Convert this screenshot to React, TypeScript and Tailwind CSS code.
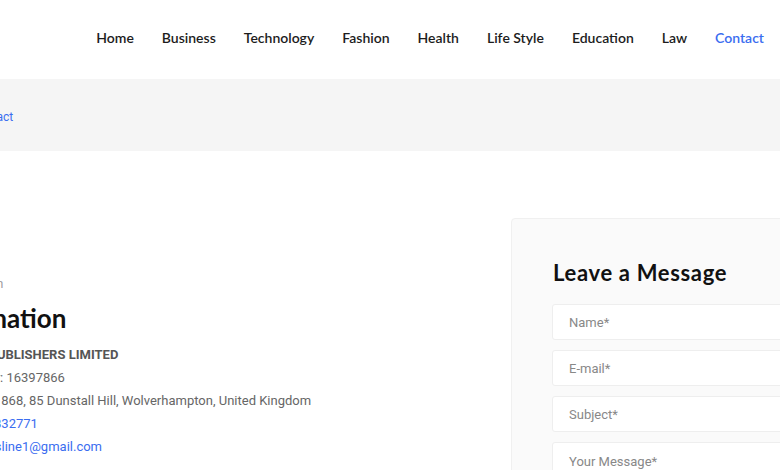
import React from 'react';

const navItems = ['Home', 'Business', 'Technology', 'Fashion', 'Health', 'Life Style', 'Education', 'Law', 'Contact'];

const heading = { fontFamily: 'Lato, "Noto Sans", sans-serif' };
const body = { fontFamily: 'Roboto, "Liberation Sans", sans-serif' };

export default function App() {
  return (
    <div className="w-[780px] h-[470px] overflow-hidden bg-white">
      {/* Header */}
      <header className="h-[79px] flex items-center justify-end pr-[16px] pb-[4px]" style={heading}>
        <nav className="flex items-center gap-[28px] text-[14px] font-semibold text-[#1c1c1c]">
          {navItems.map((item) => (
            <a key={item} href="#" className={item === 'Contact' ? 'text-[#3a6df0]' : ''}>
              {item}
            </a>
          ))}
        </nav>
      </header>

      {/* Breadcrumb */}
      <div className="h-[72px] bg-[#f5f5f5] flex items-center pt-[3px]" style={body}>
        <div className="-ml-[80px] text-[12px] text-[#555]">
          Home <span className="mx-1">/</span> <span className="text-[#3a6df0]">Contact</span>
        </div>
      </div>

      {/* Content */}
      <div className="flex pt-[67px]">
        <div className="w-[651px] shrink-0 -ml-[140px] pt-[58px]">
          <p className="ml-[3px] text-[12px] text-[#999] leading-[16px] mb-[11px]" style={body}>Get in touch with our team</p>
          <h2 className="-ml-[28px] text-[26px] font-bold text-[#111] leading-[30px] mb-[10px]" style={heading}>
            Contact Information
          </h2>
          <div className="ml-[10px] text-[13px] leading-[23px] text-[#666] whitespace-nowrap" style={body}>
            <p className="font-bold text-[#555]">THE NEWS PORTAL PUBLISHERS LIMITED</p>
            <p>Company Reg Number: 16397866</p>
            <p>Registered Office: Unit 868, 85 Dunstall Hill, Wolverhampton, United Kingdom</p>
            <p>
              Telephone: <a href="#" className="text-[#3a6df0]">+44 7457 832771</a>
            </p>
            <p>
              Email Us: <a href="#" className="text-[#3a6df0]">info.thenewsline1@gmail.com</a>
            </p>
          </div>
        </div>

        <div className="w-[420px] shrink-0 bg-[#fafafa] border border-[#f0f0f0] rounded-[4px] pl-[40px] pt-[40px] pb-[40px]">
          <h3 className="text-[22px] tracking-[0.03em] font-bold text-[#111] leading-[28px] mb-[17px] ml-[1px]" style={heading}>
            Leave a Message
          </h3>
          <form className="flex flex-col gap-[10px]" style={body}>
            {['Name*', 'E-mail*', 'Subject*'].map((p) => (
              <input
                key={p}
                placeholder={p}
                className="h-[36px] w-full bg-white border border-[#eeeeee] rounded-[3px] px-[16px] text-[13px] placeholder:text-[#888] outline-none"
              />
            ))}
            <textarea
              placeholder="Your Message*"
              className="h-[120px] w-full bg-white border border-[#eeeeee] rounded-[3px] px-[16px] py-[9px] text-[13px] placeholder:text-[#888] outline-none resize-none"
            />
          </form>
        </div>
      </div>
    </div>
  );
}
